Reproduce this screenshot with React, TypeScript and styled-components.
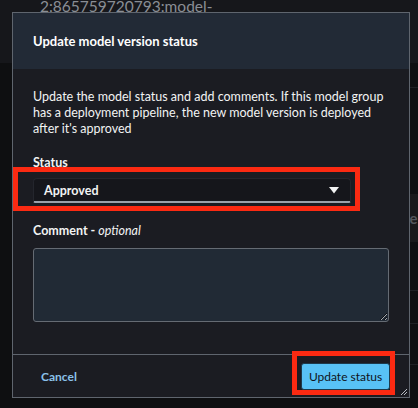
import React from "react";
import styled, { createGlobalStyle } from "styled-components";

const GlobalStyle = createGlobalStyle`
  html, body {
    margin: 0;
    padding: 0;
    background: #0e0f11;
  }
  * {
    box-sizing: border-box;
  }
`;

const Page = styled.div`
  position: relative;
  width: 418px;
  height: 408px;
  overflow: hidden;
  background: #0e0f11;
  font-family: Lato, "Open Sans", sans-serif;
`;

const TopStrip = styled.div`
  height: 63px;
  background: #16171b;
  padding-left: 40px;
  overflow: hidden;
`;

const ArnText = styled.div`
  margin-top: -4px;
  font-size: 15.5px;
  line-height: 20px;
  color: #8a8e95;
  white-space: nowrap;
`;

const BgTable = styled.div`
  display: flex;
  flex-direction: column;
  padding-left: 398px;
`;

const BgRow = styled.div<{ $h: number; $bg?: string; $line?: boolean }>`
  height: ${(p) => p.$h}px;
  background: ${(p) => p.$bg || "transparent"};
  border-bottom: ${(p) => (p.$line ? "1px solid #1e2024" : "none")};
  display: flex;
  align-items: center;
  padding-left: 3px;
  font-size: 15px;
  font-weight: 700;
  color: #54575c;
  white-space: nowrap;
`;

const Modal = styled.div`
  position: absolute;
  left: 12px;
  top: 12px;
  width: 398px;
  height: 386px;
  border: 1px solid #5f656e;
  background: #1b1c22;
  display: flex;
  flex-direction: column;
`;

const Header = styled.div`
  height: 56px;
  background: #222a36;
  display: flex;
  align-items: center;
  padding: 0 20px;
  font-size: 13px;
  font-weight: 700;
  color: #ffffff;
`;

const Body = styled.div`
  flex: 1;
  padding: 20px 20px 0;
  display: flex;
  flex-direction: column;
`;

const Description = styled.p`
  margin: 0;
  font-size: 12.5px;
  line-height: 16px;
  color: #f2f3f3;
`;

const Label = styled.div<{ $top: number; $gap: number }>`
  margin-top: ${(p) => p.$top}px;
  margin-bottom: ${(p) => p.$gap}px;
  font-size: 12.5px;
  line-height: 16px;
  font-weight: 700;
  color: #f2f3f3;

  em {
    font-weight: 400;
  }
`;

const Select = styled.div`
  width: 318px;
  height: 25px;
  background: #15161b;
  border: 1px solid #24262d;
  border-bottom: 2px solid #9aa2ac;
  border-radius: 4px 4px 2px 2px;
  display: flex;
  align-items: center;
  justify-content: space-between;
  padding: 0 11px 0 10px;
  font-size: 12.5px;
  font-weight: 700;
  color: #f2f3f3;
`;

const TextArea = styled.textarea`
  display: block;
  width: 356px;
  height: 74px;
  background: #212a35;
  border: 1px solid #656b73;
  border-radius: 3px;
  color: #f2f3f3;
  color-scheme: dark;
  resize: both;
  font-family: inherit;
  outline: none;
`;

const Footer = styled.div`
  height: 43px;
  border-top: 1px solid #5f656e;
  display: flex;
  align-items: center;
  justify-content: space-between;
  padding: 0 19px 0 20px;
`;

const LinkButton = styled.button`
  background: none;
  border: none;
  padding: 0 8px;
  font-family: inherit;
  font-size: 12px;
  font-weight: 700;
  color: #8bc1ea;
  cursor: pointer;
`;

const PrimaryButton = styled.button`
  width: 89px;
  height: 27px;
  background: #58c2f6;
  border: 1px solid #1d3a4c;
  border-radius: 3px;
  font-family: inherit;
  font-size: 12px;
  font-weight: 400;
  color: #0f141a;
  padding: 0;
  cursor: pointer;
`;

const Grip = styled.svg`
  position: absolute;
  right: 1px;
  bottom: 1px;
`;

const Highlight = styled.div<{ $x: number; $y: number; $w: number; $h: number }>`
  position: absolute;
  left: ${(p) => p.$x}px;
  top: ${(p) => p.$y}px;
  width: ${(p) => p.$w}px;
  height: ${(p) => p.$h}px;
  border: 5px solid #fb2a12;
  pointer-events: none;
`;

export default function App() {
  return (
    <>
      <GlobalStyle />
      <Page>
        <TopStrip>
          <ArnText>2:865759720793:model-</ArnText>
        </TopStrip>
        <BgTable>
          <BgRow $h={25} $line />
          <BgRow $h={106} />
          <BgRow $h={48} $bg="#19191b">
            ne
          </BgRow>
          <BgRow $h={49} $line />
          <BgRow $h={33} $line>
            f
          </BgRow>
          <BgRow $h={41} $line />
        </BgTable>

        <Modal>
          <Header>Update model version status</Header>
          <Body>
            <Description>
              Update the model status and add comments. If this model group has a deployment
              pipeline, the new model version is deployed after it's approved
            </Description>
            <Label $top={18} $gap={7}>
              Status
            </Label>
            <Select>
              <span>Approved</span>
              <svg width="10" height="7" viewBox="0 0 10 7">
                <path d="M0 0 H10 L5 6.5 Z" fill="#f2f3f3" />
              </svg>
            </Select>
            <Label $top={20} $gap={9}>
              Comment - <em>optional</em>
            </Label>
            <TextArea />
          </Body>
          <Footer>
            <LinkButton>Cancel</LinkButton>
            <PrimaryButton>Update status</PrimaryButton>
          </Footer>
          <Grip width="8" height="8" viewBox="0 0 8 8">
            <path d="M7 1 L1 7 M7 4 L4 7" stroke="#b8bcc2" strokeWidth="1" />
          </Grip>
        </Modal>

        <Highlight $x={13} $y={167} $w={347} $h={44} />
        <Highlight $x={292} $y={351} $w={103} $h={44} />
      </Page>
    </>
  );
}
